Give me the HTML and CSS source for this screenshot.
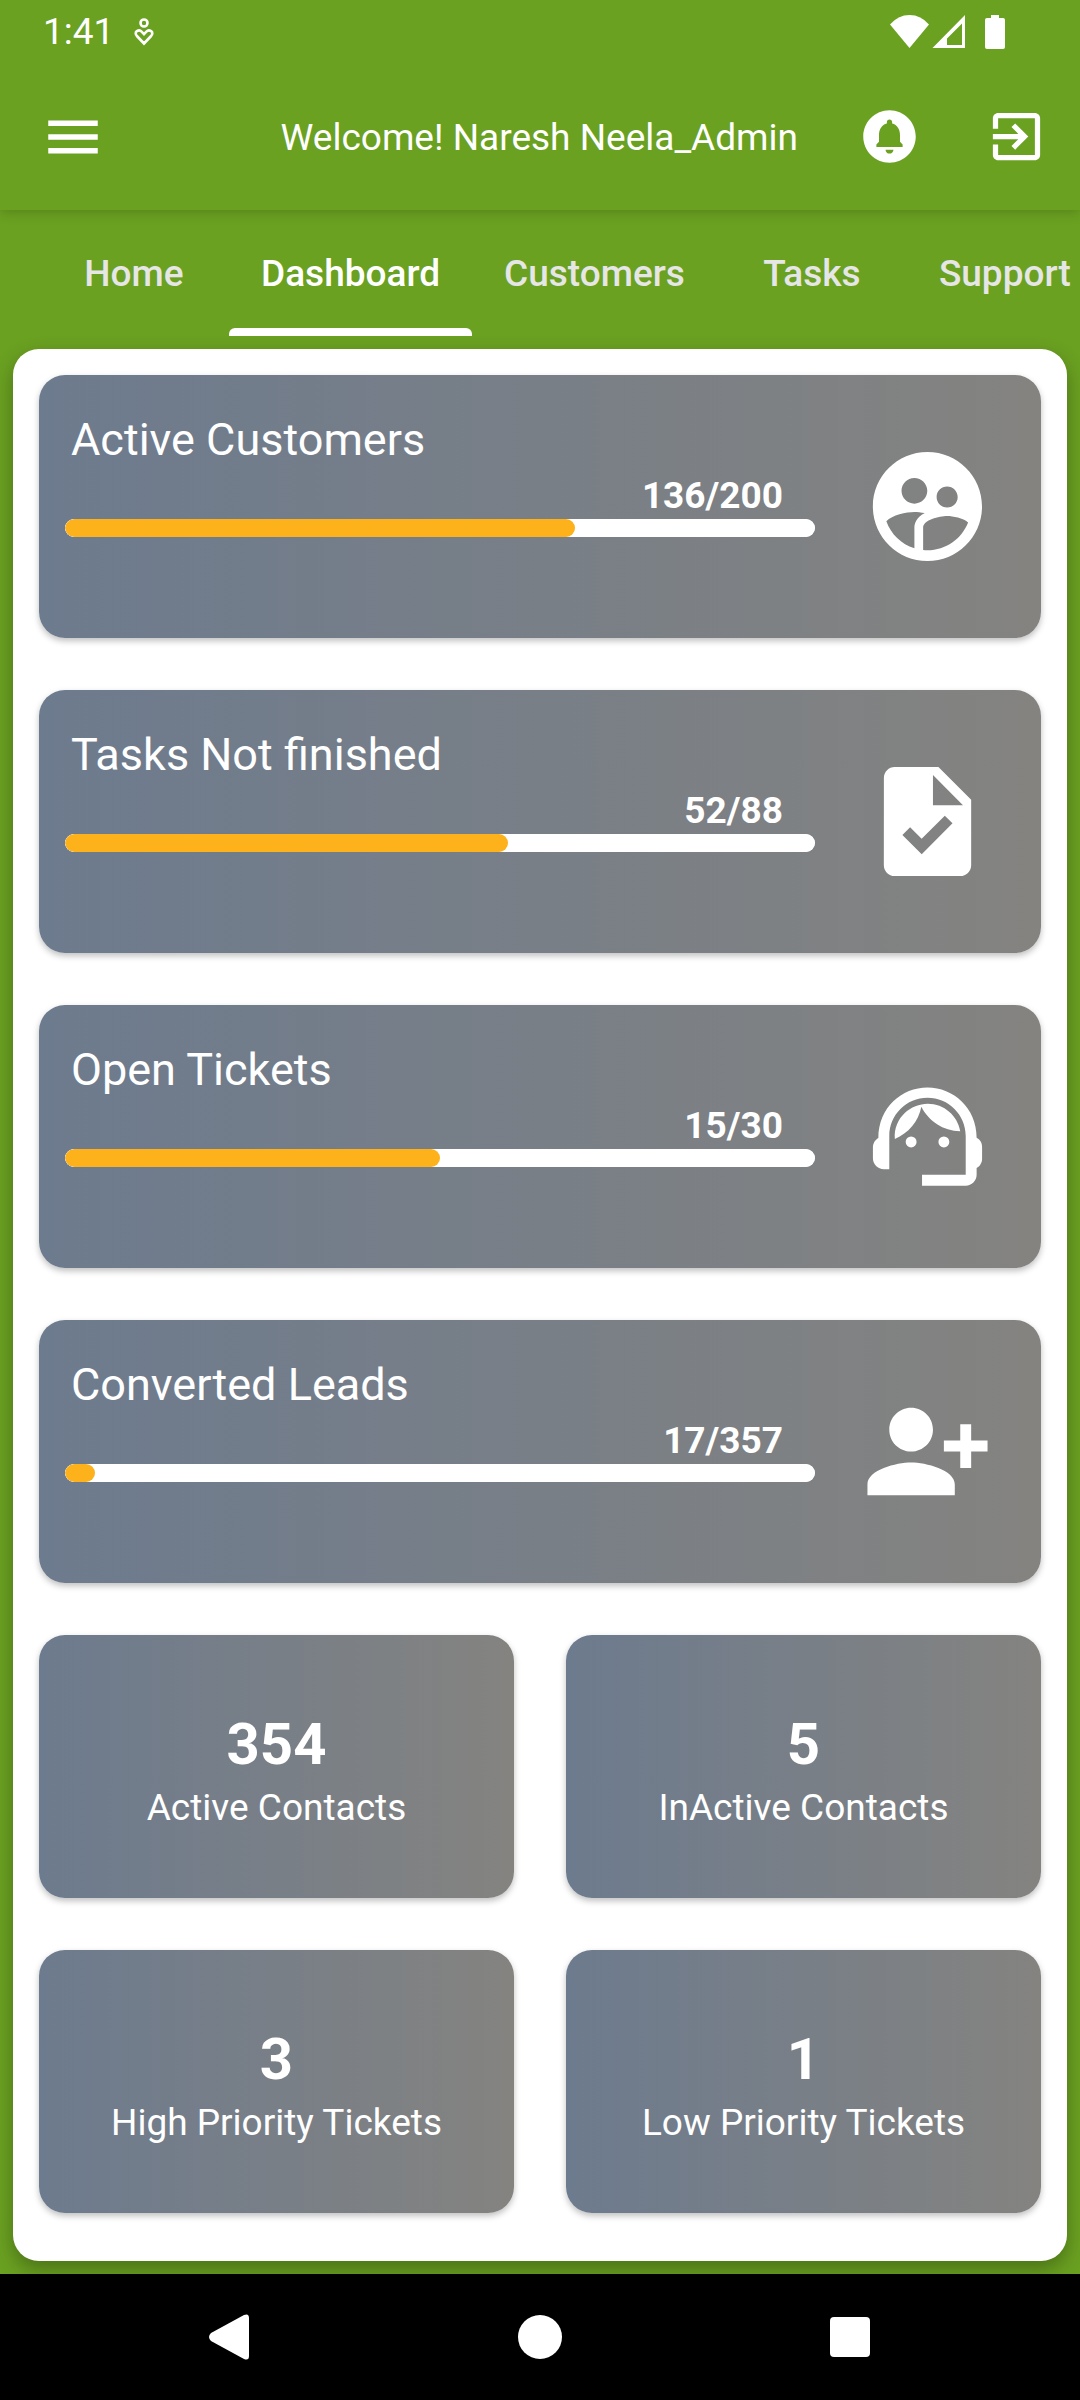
FILE: index.html
```html
<!DOCTYPE html>
<html lang="en">
<head>
<meta charset="utf-8">
<meta name="viewport" content="width=device-width, initial-scale=1">
<title>Dashboard</title>
<link rel="stylesheet" href="styles.css">
</head>
<body>
<div class="app">
  <header class="top">
    <div class="status">
      <div class="status-group">
        <span class="clock">1:41</span>
        <svg class="care-icon" viewBox="0 0 20 28" aria-hidden="true"><circle cx="10" cy="5" r="3.500"/><path d="M10 25.500 2.900 18C1.300 16.200 1.300 14.200 2.900 13.200 4.600 12.100 6.300 12.300 7.600 13.700L10 16.200l2.400-2.500c1.300-1.400 3-1.600 4.700-.5 1.600 1 1.600 3 0 4.800z"/></svg>
      </div>
      <div class="status-group">
        <svg class="signals" viewBox="0 0 75 34" aria-hidden="true"><path d="M0 9.500Q8 0 19.500 0T39 9.500L19.500 33z"/><path fill-rule="evenodd" d="M75 0v33H42.500zM72 8.500 57 23.500V30h15z"/></svg>
        <svg class="battery" viewBox="0 0 20 34" aria-hidden="true"><path d="M6 0h8v3h4q2 0 2 2v27q0 2-2 2H2q-2 0-2-2V5q0-2 2-2h4z"/></svg>
      </div>
    </div>
    <div class="bar">
      <button class="icon-btn menu-btn" type="button" aria-label="Menu"><svg viewBox="0 0 24 24"><path d="M3 18h18v-2H3v2zm0-5h18v-2H3v2zm0-7v2h18V6H3z"/></svg></button>
      <h1 class="welcome">Welcome! Naresh Neela_Admin</h1>
      <div class="actions">
        <button class="icon-btn" type="button" aria-label="Notifications"><svg viewBox="0 0 24 24"><path d="M12 2C6.480 2 2 6.480 2 12s4.480 10 10 10 10-4.480 10-10S17.520 2 12 2zm0 16.500c-.83 0-1.500-.67-1.500-1.500h3c0 .83-.67 1.500-1.500 1.500zm5-2.500H7v-1l1-1v-2.610C8 9.270 9.030 7.470 11 7v-.5c0-.57.43-1 1-1s1 .43 1 1V7c1.970.47 3 2.280 3 4.390V14l1 1v1z"/></svg></button>
        <button class="icon-btn" type="button" aria-label="Log out"><svg viewBox="0 0 24 24"><path d="M10.090 15.590L11.500 17l5-5-5-5-1.410 1.410L12.670 11H3v2h9.670l-2.580 2.590zM19 3H5c-1.110 0-2 .9-2 2v4h2V5h14v14H5v-4H3v4c0 1.100.89 2 2 2h14c1.100 0 2-.9 2-2V5c0-1.100-.9-2-2-2z"/></svg></button>
      </div>
    </div>
  </header>

  <nav class="tabs" aria-label="Sections">
    <a class="tab" href="#home">Home</a>
    <a class="tab tab-active" href="#dashboard" aria-current="page">Dashboard</a>
    <a class="tab" href="#customers">Customers</a>
    <a class="tab" href="#tasks">Tasks</a>
    <a class="tab" href="#support">Support</a>
  </nav>

  <main class="panel">
    <section class="card metric">
      <div class="metric-body">
        <h2 class="metric-title" id="m1">Active Customers</h2>
        <p class="metric-count">136/200</p>
        <progress class="meter" value="68" max="100" aria-labelledby="m1"></progress>
      </div>
      <svg class="metric-icon" viewBox="0 0 24 24" aria-hidden="true"><path d="M11.990 2c-5.520 0-10 4.480-10 10s4.480 10 10 10 10-4.480 10-10-4.480-10-10-10zm3.610 6.340c1.070 0 1.930.86 1.930 1.930 0 1.070-.86 1.930-1.930 1.930-1.070 0-1.930-.86-1.930-1.930-.01-1.070.86-1.930 1.930-1.930zm-6-1.580c1.300 0 2.360 1.060 2.360 2.360 0 1.300-1.060 2.360-2.360 2.360s-2.360-1.060-2.360-2.360c0-1.310 1.050-2.360 2.360-2.360zm0 9.130v3.750c-2.400-.75-4.300-2.600-5.140-4.960 1.050-1.120 3.670-1.690 5.140-1.690.53 0 1.200.08 1.900.22-1.640.87-1.900 2.020-1.900 2.680zM11.990 20c-.27 0-.53-.01-.79-.04v-4.070c0-1.420 2.940-2.130 4.400-2.130 1.070 0 2.920.39 3.840 1.150-1.170 2.970-4.060 5.090-7.450 5.090z"/></svg>
    </section>

    <section class="card metric">
      <div class="metric-body">
        <h2 class="metric-title" id="m2">Tasks Not finished</h2>
        <p class="metric-count">52/88</p>
        <progress class="meter" value="59" max="100" aria-labelledby="m2"></progress>
      </div>
      <svg class="metric-icon" viewBox="0 0 24 24" aria-hidden="true"><path d="M14 2H6c-1.100 0-1.990.9-1.990 2L4 20c0 1.100.89 2 1.990 2H18c1.100 0 2-.9 2-2V8l-6-6zm-3.060 16L7.400 14.460l1.410-1.410 2.120 2.120 4.240-4.240 1.410 1.410L10.940 18zM13 9V3.500L18.500 9H13z"/></svg>
    </section>

    <section class="card metric">
      <div class="metric-body">
        <h2 class="metric-title" id="m3">Open Tickets</h2>
        <p class="metric-count">15/30</p>
        <progress class="meter" value="50" max="100" aria-labelledby="m3"></progress>
      </div>
      <svg class="metric-icon" viewBox="0 0 24 24" aria-hidden="true"><path d="M21 12.220C21 6.730 16.740 3 12 3c-4.690 0-9 3.650-9 9.280C2.400 12.620 2 13.260 2 14v2c0 1.100.9 2 2 2h1v-6.100c0-3.870 3.130-7 7-7s7 3.130 7 7V19h-8v2h8c1.100 0 2-.9 2-2v-1.220c.59-.31 1-.92 1-1.640v-2.300c0-.7-.41-1.310-1-1.620z"/><circle cx="9" cy="13" r="1"/><circle cx="15" cy="13" r="1"/><path d="M18 11.030C17.520 8.180 15.040 6 12.050 6c-3.030 0-6.290 2.510-6.030 6.450 2.470-1.010 4.330-3.210 4.860-5.890 1.310 2.630 4 4.440 7.120 4.470z"/></svg>
    </section>

    <section class="card metric">
      <div class="metric-body">
        <h2 class="metric-title" id="m4">Converted Leads</h2>
        <p class="metric-count">17/357</p>
        <progress class="meter" value="4" max="100" aria-labelledby="m4"></progress>
      </div>
      <svg class="metric-icon" viewBox="0 0 24 24" aria-hidden="true"><path d="M13 8c0-2.210-1.790-4-4-4S5 5.790 5 8s1.790 4 4 4 4-1.790 4-4zm2 2v2h3v3h2v-3h3v-2h-3V7h-2v3h-3zM1 18v2h16v-2c0-2.660-5.330-4-8-4s-8 1.340-8 4z"/></svg>
    </section>

    <div class="totals">
      <section class="card total"><p class="total-value">354</p><h2 class="total-label">Active Contacts</h2></section>
      <section class="card total"><p class="total-value">5</p><h2 class="total-label">InActive Contacts</h2></section>
      <section class="card total"><p class="total-value">3</p><h2 class="total-label">High Priority Tickets</h2></section>
      <section class="card total"><p class="total-value">1</p><h2 class="total-label">Low Priority Tickets</h2></section>
    </div>
  </main>

  <footer class="system-nav">
    <button class="system-btn" type="button" aria-label="Back"><svg viewBox="0 0 46 46"><path d="M37 1q5-2 5 3v38q0 5-5 3L4 27q-4-4 0-8z"/></svg></button>
    <button class="system-btn" type="button" aria-label="Home"><svg viewBox="0 0 46 46"><circle cx="23" cy="23" r="22"/></svg></button>
    <button class="system-btn" type="button" aria-label="Recent apps"><svg viewBox="0 0 46 46"><rect x="3" y="3" width="40" height="40" rx="4"/></svg></button>
  </footer>
</div>
</body>
</html>
```
FILE: styles.css
```css
* { box-sizing: border-box; }

body {
  margin: 0;
  background: #6aa121;
  color: #fff;
  font-family: Roboto, "Liberation Sans", sans-serif;
  font-size: 37px;
  line-height: 44px;
}

h1, h2, p { margin: 0; font-size: inherit; font-weight: 400; }

svg { display: block; fill: #fff; }

button {
  padding: 0;
  border: 0;
  background: none;
  cursor: pointer;
}

.app {
  display: flex;
  flex-direction: column;
  min-height: 100vh;
  overflow: hidden;
}

/* Header */
.top {
  position: relative;
  background: #6aa121;
  box-shadow: 0 2px 12px rgba(0, 0, 0, .2);
}

.status {
  display: flex;
  justify-content: space-between;
  align-items: center;
  height: 63px;
  padding: 0 75px 0 43px;
}

.status-group { display: flex; align-items: center; gap: 20px; }
.care-icon { width: 20px; height: 28px; fill: none; stroke: #fff; stroke-width: 2.6; }
.signals { width: 75px; height: 34px; }
.battery { width: 20px; height: 34px; }

.bar {
  display: flex;
  align-items: center;
  gap: 60px;
  height: 147px;
  padding: 0 32px 0 40px;
}

.welcome { margin-left: auto; padding-top: 2px; white-space: nowrap; }
.actions { display: flex; gap: 64px; }
.icon-btn { width: 63px; height: 63px; }
.menu-btn { width: 66px; height: 66px; }

/* Tabs */
.tabs {
  display: flex;
  height: 126px;
  padding-left: 39px;
}

.tab {
  display: flex;
  flex: none;
  align-items: center;
  justify-content: center;
  min-width: 190px;
  padding: 2px 32px 0;
  color: #e6e6e6;
  font-weight: 500;
  text-decoration: none;
}

.tab-active {
  position: relative;
  color: #fff;
}

.tab-active::after {
  content: "";
  position: absolute;
  right: 0;
  bottom: 0;
  left: 0;
  height: 8px;
  border-radius: 6px 6px 0 0;
  background: #fff;
}

/* Content */
.panel {
  display: flex;
  flex-direction: column;
  gap: 52px;
  margin: 13px;
  padding: 26px 26px 48px;
  border-radius: 26px;
  background: #fff;
  box-shadow: 0 8px 20px rgba(0, 0, 0, .3);
}

.card {
  min-height: 263px;
  border-radius: 26px;
  background: linear-gradient(90deg, #6d7b8e, #848380);
  box-shadow: 0 3px 6px rgba(0, 0, 0, .25);
}

.metric {
  display: flex;
  align-items: center;
  gap: 47px;
  padding: 0 48px 0 26px;
}

.metric-body {
  display: flex;
  flex: 1;
  flex-direction: column;
  align-self: flex-start;
  padding-top: 39px;
}

.metric-title {
  padding-left: 6px;
  font-size: 45px;
  line-height: 52px;
}

.metric-count {
  padding: 8px 32px 1px;
  font-weight: 700;
  text-align: right;
}

.metric-icon { flex: none; width: 131px; height: 131px; }

.meter {
  display: block;
  width: 100%;
  height: 18px;
  border: 0;
  border-radius: 9px;
  background: #fff;
  appearance: none;
  overflow: hidden;
}

.meter::-webkit-progress-bar { border-radius: 9px; background: #fff; }
.meter::-webkit-progress-value { border-radius: 9px; background: #fdb11a; }
.meter::-moz-progress-bar { border-radius: 9px; background: #fdb11a; }

.totals {
  display: grid;
  grid-template-columns: 1fr 1fr;
  gap: 52px;
}

.total {
  display: flex;
  flex-direction: column;
  align-items: center;
  justify-content: center;
  gap: 8px;
  padding-top: 6px;
}

.total-value { font-size: 58px; font-weight: 700; line-height: 68px; }

/* System navigation */
.system-nav {
  position: relative;
  display: flex;
  justify-content: center;
  gap: 264px;
  margin-top: auto;
  padding: 40px 0;
  background: #000;
}

.system-btn { width: 46px; height: 46px; }
```
